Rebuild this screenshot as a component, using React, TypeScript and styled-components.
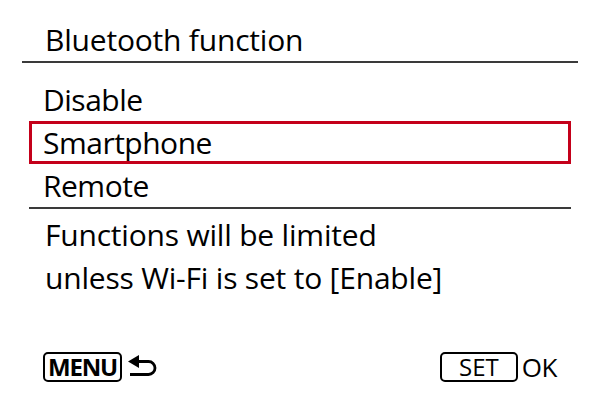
import { FC } from "react";
import styled, { createGlobalStyle } from "styled-components";

const GlobalStyle = createGlobalStyle`
  html, body {
    margin: 0;
    padding: 0;
    background: #fff;
  }
  body {
    font-family: "Open Sans", "Noto Sans", sans-serif;
    color: #000;
  }
`;

const options = ["Disable", "Smartphone", "Remote"];

const App: FC = () => {
  return (
    <>
      <GlobalStyle />
      <Screen>
        <Header>
          <Title>Bluetooth function</Title>
        </Header>

        <Options>
          {options.map((label) => (
            <Option key={label} $selected={label === "Smartphone"}>
              {label}
            </Option>
          ))}
        </Options>

        <Message>
          Functions will be limited
          <br />
          unless Wi-Fi is set to [Enable]
        </Message>

        <Footer>
          <Hint>
            <Key $width={79}>MENU</Key>
            <BackIcon viewBox="0 0 30 24">
              <polygon points="0,6.5 11,0 11,13" fill="#000" />
              <path
                d="M10 6.5 H20.5 A6.5 6.5 0 0 1 20.5 19.5 H2"
                fill="none"
                stroke="#000"
                strokeWidth="2.8"
              />
            </BackIcon>
          </Hint>
          <Hint>
            <Key $width={78} $set>
              SET
            </Key>
            <HintLabel>OK</HintLabel>
          </Hint>
        </Footer>
      </Screen>
    </>
  );
};

export default App;

const Screen = styled.div`
  width: 600px;
  height: 400px;
  box-sizing: border-box;
  padding-top: 18px;
  display: flex;
  flex-direction: column;
  overflow: hidden;
`;

const Header = styled.div`
  margin: 0 22px;
  padding-left: 23px;
  border-bottom: 2px solid #3a3a3a;
`;

const Title = styled.div`
  font-size: 30px;
  line-height: 43px;
  letter-spacing: -0.2px;
`;

const Options = styled.div`
  margin: 15px 29px 0;
  border-bottom: 2px solid #3a3a3a;
  display: flex;
  flex-direction: column;
`;

const Option = styled.div<{ $selected?: boolean }>`
  height: 43px;
  box-sizing: border-box;
  padding-left: 11px;
  font-size: 30px;
  line-height: 37px;
  letter-spacing: -0.5px;
  border: 3px solid ${(p) => (p.$selected ? "#c4001a" : "transparent")};
`;

const Message = styled.div`
  margin-top: 4px;
  padding-left: 45px;
  font-size: 30px;
  line-height: 43px;
  letter-spacing: -0.2px;
`;

const Footer = styled.div`
  margin-top: auto;
  margin-bottom: 18px;
  padding: 0 43px;
  display: flex;
  justify-content: space-between;
  align-items: center;
`;

const Hint = styled.div`
  display: flex;
  align-items: center;
  gap: 6px;
`;

const Key = styled.div<{ $width: number; $set?: boolean }>`
  width: ${(p) => p.$width}px;
  height: 30px;
  box-sizing: border-box;
  border: 2px solid #000;
  border-radius: 5px;
  display: flex;
  align-items: center;
  justify-content: center;
  font-size: 24px;
  font-weight: ${(p) => (p.$set ? 500 : 700)};
  letter-spacing: ${(p) => (p.$set ? "0" : "-1.2px")};
  line-height: 1;
  padding-bottom: 1px;
`;

const BackIcon = styled.svg`
  width: 30px;
  height: 24px;
`;

const HintLabel = styled.span`
  font-size: 26px;
  line-height: 30px;
  margin-left: -2px;
  letter-spacing: -0.5px;
`;
